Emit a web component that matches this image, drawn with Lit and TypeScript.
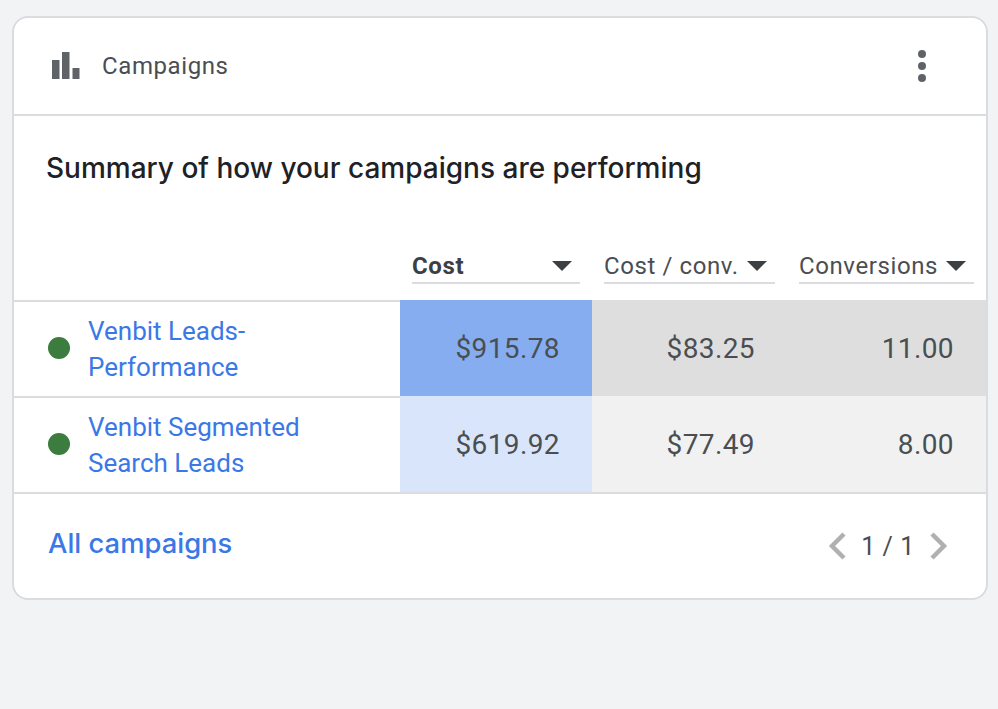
import { LitElement, html, css } from 'lit';
import { customElement } from 'lit/decorators.js';

const COLUMNS = [
  { label: 'Cost', active: true },
  { label: 'Cost / conv.', active: false },
  { label: 'Conversions', active: false },
];

const ROWS = [
  { name: ['Venbit Leads-', 'Performance'], cost: '$915.78', costPerConv: '$83.25', conversions: '11.00', tint: 'strong' },
  { name: ['Venbit Segmented', 'Search Leads'], cost: '$619.92', costPerConv: '$77.49', conversions: '8.00', tint: 'light' },
];

@customElement('app-root')
export class AppRoot extends LitElement {
  static styles = css`
    :host {
      display: block;
      height: 709px;
      background: #f1f3f4;
      padding: 16px 10px 0 12px;
      box-sizing: border-box;
      font-family: Roboto, sans-serif;
      color: #3c4043;
    }

    .card {
      background: #fff;
      border: 2px solid #dadce0;
      border-radius: 16px;
      height: 584px;
      box-sizing: border-box;
      overflow: hidden;
    }

    .card-header {
      display: flex;
      align-items: center;
      justify-content: space-between;
      height: 98px;
      box-sizing: border-box;
      border-bottom: 2px solid #dadce0;
      padding: 0 58px 0 36px;
    }

    .card-title {
      display: flex;
      align-items: center;
      gap: 22px;
      font-size: 24px;
      letter-spacing: 0.6px;
      color: #4a4e52;
    }

    .bars {
      display: block;
      width: 30px;
      height: 30px;
      fill: #5f6368;
    }

    .dots {
      display: block;
      width: 12px;
      height: 36px;
      fill: #5f6368;
    }

    .summary {
      margin: 0;
      padding: 34px 0 0 32px;
      font-family: Inter, Roboto, sans-serif;
      font-size: 28px;
      line-height: 36px;
      font-weight: 500;
      color: #202124;
    }

    .row {
      display: grid;
      grid-template-columns: 386px 192px 195px 199px;
    }

    .head-row {
      height: 114px;
      align-items: end;
      box-sizing: border-box;
      padding-bottom: 16px;
    }

    .head-cell {
      display: flex;
      align-items: center;
      justify-content: space-between;
      margin: 0 12px;
      height: 34px;
      box-sizing: border-box;
      border-bottom: 2px solid #dadce0;
      font-size: 24px;
      letter-spacing: 0.6px;
      color: #4a4e52;
    }

    .head-cell.active {
      font-weight: 700;
      color: #3c4043;
    }

    .caret {
      width: 0;
      height: 0;
      border-left: 10px solid transparent;
      border-right: 10px solid transparent;
      border-top: 10px solid #3c4043;
      margin-right: 8px;
    }

    .data-row {
      height: 96px;
    }

    .data-row.last {
      height: 98px;
      border-bottom: 2px solid #dadce0;
      box-sizing: border-box;
    }

    .name-cell {
      display: flex;
      align-items: center;
      gap: 18px;
      padding-left: 34px;
      border-top: 2px solid #dadce0;
    }

    .status {
      width: 22px;
      height: 22px;
      border-radius: 50%;
      background: #3c7c3f;
      flex: none;
      margin-top: -2px;
    }

    .name {
      font-size: 26px;
      line-height: 36px;
      color: #3b78e7;
    }

    .num {
      display: flex;
      align-items: center;
      justify-content: flex-end;
      padding-right: 32px;
      font-size: 28px;
      letter-spacing: 0.4px;
      color: #4a4e52;
    }

    .cost-strong { background: #86adf0; }
    .cost-light { background: #d9e5fb; }
    .other-strong { background: #dedede; }
    .other-light { background: #f1f1f1; }

    .footer {
      display: flex;
      align-items: center;
      justify-content: space-between;
      height: 104px;
      box-sizing: border-box;
      padding: 0 38px 0 34px;
    }

    .all-link {
      font-family: Inter, Roboto, sans-serif;
      font-size: 27.4px;
      font-weight: 500;
      color: #3b78e7;
      margin-bottom: 6px;
    }

    .pager {
      display: flex;
      align-items: center;
      gap: 13px;
      font-size: 25px;
      letter-spacing: 0.6px;
      color: #4a4e52;
    }

    .chev {
      display: block;
      width: 20px;
      height: 30px;
      fill: none;
      stroke: #b0b0b0;
      stroke-width: 4.5;
    }
  `;

  render() {
    return html`<div class="card">
      ${this.renderHeader()}
      <h2 class="summary">Summary of how your campaigns are performing</h2>
      ${this.renderTable()} ${this.renderFooter()}
    </div>`;
  }

  private renderHeader() {
    return html`<header class="card-header">
      <div class="card-title">
        <svg class="bars" viewBox="0 0 30 30">
          <rect x="2" y="9" width="7.5" height="19"></rect>
          <rect x="12" y="1" width="7.5" height="27"></rect>
          <rect x="22.5" y="17" width="7" height="11"></rect>
        </svg>
        <span>Campaigns</span>
      </div>
      <svg class="dots" viewBox="0 0 12 36">
        <circle cx="6" cy="6" r="4"></circle>
        <circle cx="6" cy="18" r="4"></circle>
        <circle cx="6" cy="30" r="4"></circle>
      </svg>
    </header>`;
  }

  private renderTable() {
    return html`<div class="row head-row">
        <div></div>
        ${COLUMNS.map(
          (c) => html`<div class="head-cell ${c.active ? 'active' : ''}">
            <span>${c.label}</span><span class="caret"></span>
          </div>`
        )}
      </div>
      ${ROWS.map(
        (r, i) => html`<div class="row data-row ${i === ROWS.length - 1 ? 'last' : ''}">
          <div class="name-cell">
            <span class="status"></span>
            <span class="name">${r.name[0]}<br />${r.name[1]}</span>
          </div>
          <div class="num cost-${r.tint}">${r.cost}</div>
          <div class="num other-${r.tint}">${r.costPerConv}</div>
          <div class="num other-${r.tint}">${r.conversions}</div>
        </div>`
      )}`;
  }

  private renderFooter() {
    return html`<footer class="footer">
      <span class="all-link">All campaigns</span>
      <div class="pager">
        <svg class="chev" viewBox="0 0 20 30"><path d="M16 3 L4 15 L16 27"></path></svg>
        <span>1 / 1</span>
        <svg class="chev" viewBox="0 0 20 30"><path d="M4 3 L16 15 L4 27"></path></svg>
      </div>
    </footer>`;
  }
}
